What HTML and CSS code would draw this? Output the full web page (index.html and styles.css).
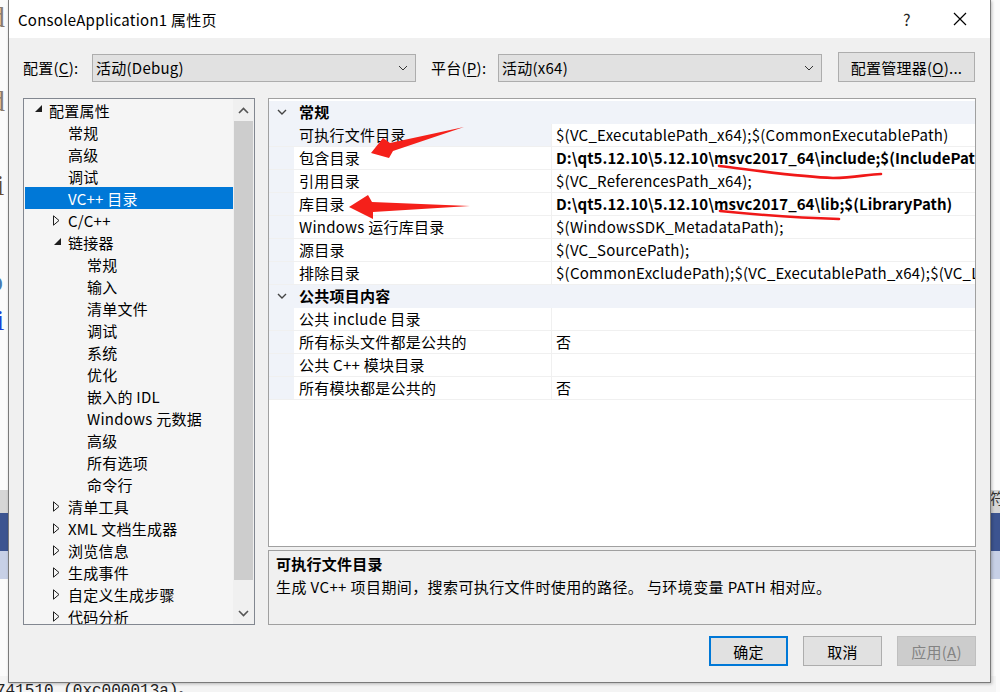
FILE: index.html
```html
<!DOCTYPE html>
<html lang="zh-CN">
<head>
<meta charset="utf-8">
<title>ConsoleApplication1 属性页</title>
<link rel="stylesheet" href="styles.css">
</head>
<body>
<div class="desktop">
  <div class="backdrop">
    <span class="frag frag-d1">d</span>
    <span class="frag frag-d2">d</span>
    <span class="frag frag-i1">i</span>
    <span class="frag frag-o">o</span>
    <span class="frag frag-i2">i</span>
    <div class="band band-gray"></div>
    <div class="band band-dark"></div>
    <div class="band band-light"></div>
    <span class="frag frag-fu">符</span>
    <div class="console-line">741510 (0xc000013a)。</div>
  </div>

  <div class="dialog">
    <div class="titlebar">
      <span class="title">ConsoleApplication1 属性页</span>
      <span class="tb-help">?</span>
      <span class="tb-close"><svg width="14" height="14" viewBox="0 0 14 14"><path d="M1 1 L13 13 M13 1 L1 13" stroke="#000" stroke-width="1.2" fill="none"/></svg></span>
    </div>

    <div class="content">
      <div class="config-row">
        <label class="cfg-label lbl-config">配置(<u>C</u>):</label>
        <div class="combo">
          <span>活动(Debug)</span>
          <svg class="chev" width="10" height="6" viewBox="0 0 10 6"><path d="M1 1 L5 5 L9 1" stroke="#333" stroke-width="1" fill="none"/></svg>
        </div>
        <label class="cfg-label lbl-platform">平台(<u>P</u>):</label>
        <div class="combo">
          <span>活动(x64)</span>
          <svg class="chev" width="10" height="6" viewBox="0 0 10 6"><path d="M1 1 L5 5 L9 1" stroke="#333" stroke-width="1" fill="none"/></svg>
        </div>
        <button class="btn btn-mgr">配置管理器(<u>O</u>)...</button>
      </div>

      <div class="main">
        <div class="tree">
          <div class="tree-list">
            <div class="ti l0"><span class="tg"><svg width="9" height="8" viewBox="0 0 9 8"><path d="M8 0 L8 7 L1 7 Z" fill="#1e1e1e"/></svg></span>配置属性</div>
            <div class="ti l1"><span class="tg"></span>常规</div>
            <div class="ti l1"><span class="tg"></span>高级</div>
            <div class="ti l1"><span class="tg"></span>调试</div>
            <div class="ti l1 sel"><span class="tg"></span>VC++ 目录</div>
            <div class="ti l1"><span class="tg"><svg width="7" height="11" viewBox="0 0 7 11"><path d="M0.5 0.8 L6 5.5 L0.5 10.2 Z" stroke="#1e1e1e" stroke-width="1" fill="none"/></svg></span>C/C++</div>
            <div class="ti l1"><span class="tg"><svg width="9" height="8" viewBox="0 0 9 8"><path d="M8 0 L8 7 L1 7 Z" fill="#1e1e1e"/></svg></span>链接器</div>
            <div class="ti l2"><span class="tg"></span>常规</div>
            <div class="ti l2"><span class="tg"></span>输入</div>
            <div class="ti l2"><span class="tg"></span>清单文件</div>
            <div class="ti l2"><span class="tg"></span>调试</div>
            <div class="ti l2"><span class="tg"></span>系统</div>
            <div class="ti l2"><span class="tg"></span>优化</div>
            <div class="ti l2"><span class="tg"></span>嵌入的 IDL</div>
            <div class="ti l2"><span class="tg"></span>Windows 元数据</div>
            <div class="ti l2"><span class="tg"></span>高级</div>
            <div class="ti l2"><span class="tg"></span>所有选项</div>
            <div class="ti l2"><span class="tg"></span>命令行</div>
            <div class="ti l1"><span class="tg"><svg width="7" height="11" viewBox="0 0 7 11"><path d="M0.5 0.8 L6 5.5 L0.5 10.2 Z" stroke="#1e1e1e" stroke-width="1" fill="none"/></svg></span>清单工具</div>
            <div class="ti l1"><span class="tg"><svg width="7" height="11" viewBox="0 0 7 11"><path d="M0.5 0.8 L6 5.5 L0.5 10.2 Z" stroke="#1e1e1e" stroke-width="1" fill="none"/></svg></span>XML 文档生成器</div>
            <div class="ti l1"><span class="tg"><svg width="7" height="11" viewBox="0 0 7 11"><path d="M0.5 0.8 L6 5.5 L0.5 10.2 Z" stroke="#1e1e1e" stroke-width="1" fill="none"/></svg></span>浏览信息</div>
            <div class="ti l1"><span class="tg"><svg width="7" height="11" viewBox="0 0 7 11"><path d="M0.5 0.8 L6 5.5 L0.5 10.2 Z" stroke="#1e1e1e" stroke-width="1" fill="none"/></svg></span>生成事件</div>
            <div class="ti l1"><span class="tg"><svg width="7" height="11" viewBox="0 0 7 11"><path d="M0.5 0.8 L6 5.5 L0.5 10.2 Z" stroke="#1e1e1e" stroke-width="1" fill="none"/></svg></span>自定义生成步骤</div>
            <div class="ti l1"><span class="tg"><svg width="7" height="11" viewBox="0 0 7 11"><path d="M0.5 0.8 L6 5.5 L0.5 10.2 Z" stroke="#1e1e1e" stroke-width="1" fill="none"/></svg></span>代码分析</div>
          </div>
          <div class="vscroll">
            <div class="sb-btn"><svg width="11" height="7" viewBox="0 0 11 7"><path d="M1 6 L5.5 1.5 L10 6" stroke="#555" stroke-width="1.6" fill="none"/></svg></div>
            <div class="sb-track"><div class="sb-thumb"></div></div>
            <div class="sb-btn"><svg width="11" height="7" viewBox="0 0 11 7"><path d="M1 1 L5.5 5.5 L10 1" stroke="#555" stroke-width="1.6" fill="none"/></svg></div>
          </div>
        </div>

        <div class="right">
          <div class="pgrid">
            <div class="prow cat"><span class="gut"><svg width="10" height="6" viewBox="0 0 10 6"><path d="M1 1 L5 5 L9 1" stroke="#444" stroke-width="1.4" fill="none"/></svg></span><span class="catname">常规</span></div>
            <div class="prow cur"><span class="gut"></span><span class="pn">可执行文件目录</span><span class="pv">$(VC_ExecutablePath_x64);$(CommonExecutablePath)</span></div>
            <div class="prow"><span class="gut"></span><span class="pn">包含目录</span><span class="pv b">D:\qt5.12.10\5.12.10\msvc2017_64\include;$(IncludePath)</span></div>
            <div class="prow"><span class="gut"></span><span class="pn">引用目录</span><span class="pv">$(VC_ReferencesPath_x64);</span></div>
            <div class="prow"><span class="gut"></span><span class="pn">库目录</span><span class="pv b">D:\qt5.12.10\5.12.10\msvc2017_64\lib;$(LibraryPath)</span></div>
            <div class="prow"><span class="gut"></span><span class="pn">Windows 运行库目录</span><span class="pv">$(WindowsSDK_MetadataPath);</span></div>
            <div class="prow"><span class="gut"></span><span class="pn">源目录</span><span class="pv">$(VC_SourcePath);</span></div>
            <div class="prow"><span class="gut"></span><span class="pn">排除目录</span><span class="pv">$(CommonExcludePath);$(VC_ExecutablePath_x64);$(VC_LibraryPath_x64)</span></div>
            <div class="prow cat"><span class="gut"><svg width="10" height="6" viewBox="0 0 10 6"><path d="M1 1 L5 5 L9 1" stroke="#444" stroke-width="1.4" fill="none"/></svg></span><span class="catname">公共项目内容</span></div>
            <div class="prow"><span class="gut"></span><span class="pn">公共 include 目录</span><span class="pv"></span></div>
            <div class="prow"><span class="gut"></span><span class="pn">所有标头文件都是公共的</span><span class="pv">否</span></div>
            <div class="prow"><span class="gut"></span><span class="pn">公共 C++ 模块目录</span><span class="pv"></span></div>
            <div class="prow"><span class="gut"></span><span class="pn">所有模块都是公共的</span><span class="pv">否</span></div>
          </div>
          <div class="desc">
            <div class="desc-title">可执行文件目录</div>
            <div class="desc-text">生成 VC++ 项目期间，搜索可执行文件时使用的路径。 与环境变量 PATH 相对应。</div>
          </div>
        </div>
      </div>

      <div class="buttons">
        <button class="btn btn-ok">确定</button>
        <button class="btn">取消</button>
        <button class="btn btn-disabled">应用(<u>A</u>)</button>
      </div>
    </div>
  </div>

  <svg class="annot" width="1000" height="692" viewBox="0 0 1000 692">
    <polygon points="371,153 383,138 390,143 464,127 393,151 389,158" fill="#f5201a"/>
    <polygon points="349,207 368,195 372,202 470,206 373,212 373,219" fill="#f5201a"/>
    <path d="M719,166 C 760,171 800,177 833,178 C 855,178 868,174 881,174" stroke="#f01818" stroke-width="2.6" fill="none" stroke-linecap="round"/>
    <path d="M720,211 C 760,215 800,218 839,219" stroke="#f01818" stroke-width="2.6" fill="none" stroke-linecap="round"/>
  </svg>
</div>
</body>
</html>
```

FILE: styles.css
```css
* { box-sizing: border-box; }
html, body { margin: 0; padding: 0; }
body {
  width: 1000px;
  height: 692px;
  overflow: hidden;
  background: #ffffff;
  font-family: "Noto Sans CJK SC", "Noto Sans", sans-serif;
  letter-spacing: 0.25px;
}
u { text-decoration: underline; text-underline-offset: 2px; }

.desktop {
  position: relative;
  width: 1000px;
  height: 692px;
  overflow: hidden;
  background: #fbfbfb;
}

/* background behind the dialog */
.backdrop { position: absolute; inset: 0; }
.frag {
  position: absolute;
  font-family: "Liberation Serif", serif;
  font-size: 30px;
  line-height: 1;
  letter-spacing: 0;
}
.frag-d1 { left: -10px; top: 2px; color: #8a7c70; }
.frag-d2 { left: -10px; top: 86px; color: #8a7c70; }
.frag-i1 { left: -4px; top: 170px; color: #6b4a2a; }
.frag-o { left: -12px; top: 266px; color: #4a7ab0; }
.frag-i2 { left: -4px; top: 305px; color: #1a3fd6; }
.frag-fu {
  left: 990px; top: 490px; font-size: 15px; color: #333;
  font-family: "Noto Sans CJK SC", sans-serif;
}
.band { position: absolute; left: 0; right: 0; }
.band-gray { top: 490px; height: 23px; background: #d6d6d6; }
.band-dark { top: 513px; height: 38px; background: #3c5490; }
.band-light { top: 551px; height: 28px; background: #c7d0e6; }
.console-line {
  position: absolute;
  left: -4px;
  top: 676px;
  font-family: "Liberation Mono", monospace;
  font-size: 16px;
  letter-spacing: 0;
  color: #222;
  background: #f4f4f4;
  width: 1000px;
}

/* dialog window */
.dialog {
  position: absolute;
  left: 8px;
  top: 0;
  width: 983px;
  height: 683px;
  background: #f0f0f0;
  border: 1px solid #7a7a7a;
  border-top: none;
  box-shadow: 1px 1px 3px rgba(0,0,0,0.25);
  display: flex;
  flex-direction: column;
  color: #000;
  font-size: 15px;
}

.titlebar {
  height: 38px;
  background: #ffffff;
  display: flex;
  align-items: center;
  padding-left: 9px;
  flex-shrink: 0;
}
.title { font-size: 15px; flex: 1; }
.tb-help { width: 50px; font-size: 16px; color: #222; }
.tb-close { width: 37px; display: flex; align-items: center; }

.content {
  flex: 1;
  display: flex;
  flex-direction: column;
  padding: 14px 14px 0 14px;
}

.config-row {
  display: flex;
  align-items: center;
  height: 30px;
}
.cfg-label { font-size: 15px; }
.lbl-config { width: 69px; }
.lbl-platform { width: 67px; margin-left: 15px; }
.combo {
  width: 324px;
  height: 28px;
  background: #e1e1e1;
  border: 1px solid #adadad;
  display: flex;
  align-items: center;
  justify-content: space-between;
  padding: 0 7px 0 3px;
  margin-top: 1px;
}
.combo span { font-size: 15px; }
.chev { margin-top: 1px; }

.btn {
  font-family: inherit;
  font-size: 15px;
  letter-spacing: 0.25px;
  color: #000;
  background: #e1e1e1;
  border: 1px solid #adadad;
  height: 30px;
  width: 79px;
  padding: 0;
}
.btn-mgr { width: 137px; margin-left: 16px; }

.main {
  display: flex;
  margin-top: 16px;
  height: 527px;
}

/* tree */
.tree {
  width: 233px;
  height: 527px;
  border: 1px solid #828790;
  background: #f5f5f5;
  display: flex;
  overflow: hidden;
}
.tree-list {
  flex: 1;
  padding: 0 0 0 1px;
  overflow: hidden;
}
.ti {
  height: 22px;
  display: flex;
  align-items: center;
  font-size: 15px;
  white-space: nowrap;
}
.ti.l0 { padding-left: 9px; }
.ti.l1 { padding-left: 28px; }
.ti.l2 { padding-left: 47px; }
.ti .tg {
  width: 15px;
  display: flex;
  align-items: center;
}
.ti.l0 .tg svg { margin-top: -2px; }
.ti.sel { background: #0078d7; color: #fff; }

.vscroll {
  width: 21px;
  display: flex;
  flex-direction: column;
  background: #f0f0f0;
}
.sb-btn {
  height: 22px;
  display: flex;
  align-items: center;
  justify-content: center;
}
.sb-track { flex: 1; padding: 0 1px 0 1px; }
.sb-thumb { height: 459px; background: #cdcdcd; }

/* right side */
.right {
  width: 708px;
  margin-left: 13px;
  display: flex;
  flex-direction: column;
}
.pgrid {
  height: 449px;
  border: 1px solid #a0a0a0;
  background: #ffffff;
  padding-top: 2px;
  overflow: hidden;
}
.prow {
  display: flex;
  height: 23px;
  border-bottom: 1px solid #f0f0f0;
  white-space: nowrap;
}
.prow .gut {
  width: 25px;
  background: #f0f3f9;
  flex-shrink: 0;
  display: flex;
  align-items: center;
  justify-content: center;
  padding-left: 1px;
}
.prow .pn {
  width: 258px;
  flex-shrink: 0;
  padding-left: 5px;
  line-height: 21px;
  border-right: 1px solid #f0f0f0;
}
.prow .pv {
  flex: 1;
  padding-left: 4px;
  line-height: 21px;
  overflow: hidden;
}
.pv.b { font-weight: bold; letter-spacing: 0.05px; }
.prow.cat { background: #f0f3f9; border-bottom-color: #f0f3f9; }
.catname { padding-left: 5px; font-weight: bold; line-height: 21px; }
.prow.cur .pn { background: #f0f3f9; }

.desc {
  margin-top: 3px;
  height: 75px;
  border: 1px solid #a0a0a0;
  background: #f0f0f0;
  padding: 2px 7px;
}
.desc-title { font-weight: bold; line-height: 22px; }
.desc-text { line-height: 24px; letter-spacing: 0.4px; }

.buttons {
  display: flex;
  justify-content: flex-end;
  gap: 15px;
  margin-top: 11px;
  padding-right: 0;
}
.btn-ok { border: 2px solid #0078d7; }
.btn-disabled { background: #cccccc; border-color: #bfbfbf; color: #838383; }

.annot {
  position: absolute;
  left: 0;
  top: 0;
  pointer-events: none;
}
```
